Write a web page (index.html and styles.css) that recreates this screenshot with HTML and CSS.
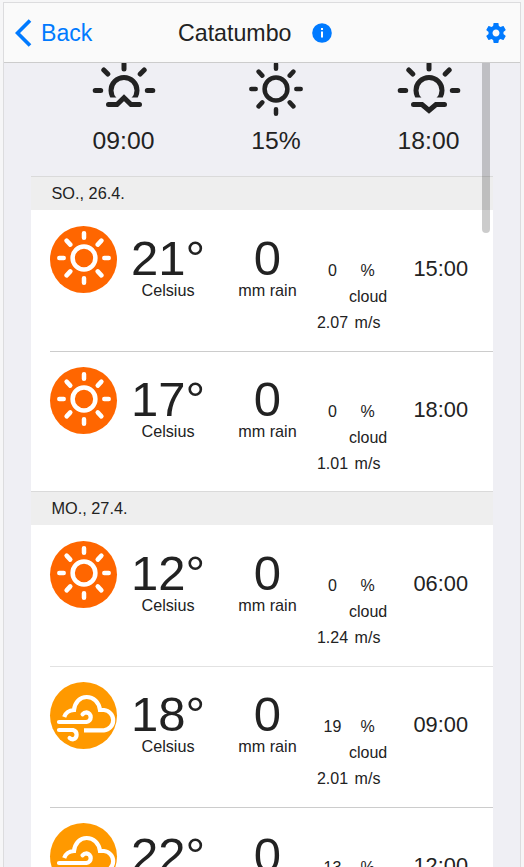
FILE: index.html
```html
<!DOCTYPE html>
<html lang="de">
<head>
<meta charset="utf-8">
<title>Catatumbo</title>
<link rel="stylesheet" href="styles.css">
</head>
<body>
<svg class="defs" aria-hidden="true">
  <clipPath id="above"><rect width="66" height="37.6"/></clipPath>
  <symbol id="sun" viewBox="0 0 60 60">
    <g fill="none" stroke="currentColor" stroke-width="4.5">
      <circle cx="30" cy="30" r="11.4"/>
      <path stroke-linecap="round" d="M30 5.3v4.4M30 50.3V54.7M5.3 30h4.4M50.3 30h4.4M12.6 12.6l3.7 4M47.4 12.6l-3.7 4M12.6 47.4l3.7-4M47.4 47.4l-3.7-4"/>
    </g>
  </symbol>
  <symbol id="horizon" viewBox="0 0 66 60">
    <g fill="none" stroke="currentColor" stroke-width="5">
      <circle cx="33" cy="30.5" r="13" clip-path="url(#above)"/>
      <path stroke-linecap="round" d="M33 4v5M4.2 30.5h5.5M56.3 30.5h5.5M12.8 10l4 4M53.2 10l-4 4"/>
    </g>
  </symbol>
  <symbol id="windcloud" viewBox="0 0 67 67">
    <g fill="none" stroke="currentColor" stroke-width="4.2">
      <path d="M14.2 35C15.5 31 19 28.3 24 28C25 20 30 15 36.7 15S49 20 50 28H54A10.2 10.2 0 0 1 54 48.3H34"/>
      <path stroke-linecap="round" d="M9 40H36.5A4.9 4.9 0 0 0 36.5 30.3Q34 30.3 32.6 32.2M9 48H23A4.8 4.8 0 0 1 23 57.3Q21 57.3 19.6 56"/>
    </g>
  </symbol>
</svg>

<div class="app">
  <header class="bar">
    <div class="back">
      <svg width="17" height="28" viewBox="0 0 17 28"><path d="M15 1.5L2.5 14L15 26.5" fill="none" stroke="currentColor" stroke-width="3.7"/></svg>
      <span>Back</span>
    </div>
    <h1 class="title">Catatumbo</h1>
    <svg class="info" width="20" height="20" viewBox="0 0 20 20"><circle cx="10" cy="10" r="9.8" fill="currentColor"/><path d="M10 8.5v6M10 5v2" stroke="#fff" stroke-width="2"/></svg>
    <svg class="gear" width="24" height="24" viewBox="0 0 24 24"><path fill="currentColor" d="M19.43 12.98c.04-.32.07-.64.07-.98s-.03-.66-.07-.98l2.11-1.65c.19-.15.24-.42.12-.64l-2-3.46c-.12-.22-.39-.3-.61-.22l-2.49 1c-.52-.4-1.08-.73-1.69-.98l-.38-2.65C14.46 2.18 14.25 2 14 2h-4c-.25 0-.46.18-.49.42l-.38 2.65c-.61.25-1.17.59-1.69.98l-2.49-1c-.23-.09-.49 0-.61.22l-2 3.46c-.13.22-.07.49.12.64l2.11 1.65c-.04.32-.07.65-.07.98s.03.66.07.98l-2.11 1.65c-.19.15-.24.42-.12.64l2 3.46c.12.22.39.3.61.22l2.49-1c.52.4 1.08.73 1.69.98l.38 2.65c.03.24.24.42.49.42h4c.25 0 .46-.18.49-.42l.38-2.65c.61-.25 1.17-.59 1.69-.98l2.49 1c.23.09.49 0 .61-.22l2-3.46c.12-.22.07-.49-.12-.64l-2.11-1.65zM12 15.5c-1.93 0-3.5-1.57-3.5-3.5s1.57-3.5 3.5-3.5 3.5 1.57 3.5 3.5-1.57 3.5-3.5 3.5z"/></svg>
  </header>

  <main class="content">
    <section class="summary">
      <div class="fact">
        <svg width="66" height="60" viewBox="0 0 66 60"><use href="#horizon"/><path d="M17.5 44.5H26L33 37.8L40 44.5H48.5" fill="none" stroke="currentColor" stroke-width="5" stroke-linecap="round"/></svg>
        <span>09:00</span>
      </div>
      <div class="fact">
        <svg class="humid" width="60" height="60"><use href="#sun"/></svg>
        <span>15%</span>
      </div>
      <div class="fact">
        <svg width="66" height="60" viewBox="0 0 66 60"><use href="#horizon"/><path d="M17.5 44.5H26L33 50.5L40 44.5H48.5" fill="none" stroke="currentColor" stroke-width="5" stroke-linecap="round"/></svg>
        <span>18:00</span>
      </div>
    </section>

    <section class="forecast">
      <h2 class="day">SO., 26.4.</h2>
      <article class="row">
        <div class="badge hot"><svg width="60" height="60"><use href="#sun"/></svg></div>
        <div class="big"><b>21°</b><span>Celsius</span></div>
        <div class="big"><b>0</b><span>mm rain</span></div>
        <div class="detail"><span>0</span><span>% cloud</span><span>2.07</span><span>m/s</span></div>
        <time>15:00</time>
      </article>
      <article class="row last">
        <div class="badge hot"><svg width="60" height="60"><use href="#sun"/></svg></div>
        <div class="big"><b>17°</b><span>Celsius</span></div>
        <div class="big"><b>0</b><span>mm rain</span></div>
        <div class="detail"><span>0</span><span>% cloud</span><span>1.01</span><span>m/s</span></div>
        <time>18:00</time>
      </article>
      <h2 class="day">MO., 27.4.</h2>
      <article class="row">
        <div class="badge hot"><svg width="60" height="60"><use href="#sun"/></svg></div>
        <div class="big"><b>12°</b><span>Celsius</span></div>
        <div class="big"><b>0</b><span>mm rain</span></div>
        <div class="detail"><span>0</span><span>% cloud</span><span>1.24</span><span>m/s</span></div>
        <time>06:00</time>
      </article>
      <article class="row light">
        <div class="badge warm"><svg width="67" height="67"><use href="#windcloud"/></svg></div>
        <div class="big"><b>18°</b><span>Celsius</span></div>
        <div class="big"><b>0</b><span>mm rain</span></div>
        <div class="detail"><span>19</span><span>% cloud</span><span>2.01</span><span>m/s</span></div>
        <time>09:00</time>
      </article>
      <article class="row">
        <div class="badge warm"><svg width="67" height="67"><use href="#windcloud"/></svg></div>
        <div class="big"><b>22°</b><span>Celsius</span></div>
        <div class="big"><b>0</b><span>mm rain</span></div>
        <div class="detail"><span>13</span><span>% cloud</span><span>2.01</span><span>m/s</span></div>
        <time>12:00</time>
      </article>
    </section>
    <div class="scrollbar"></div>
  </main>
</div>
</body>
</html>
```
FILE: styles.css
```css
* { box-sizing: border-box; }
html, body { height: 100%; overflow: hidden; }
body {
  margin: 0;
  padding: 2px 3px 0 3px;
  background: #f6f6f7;
  color: #222;
  font-family: "Liberation Sans", Arial, sans-serif;
}
svg { display: block; flex: none; }
.defs { position: absolute; width: 0; height: 0; }
.app {
  height: 865px;
  display: flex;
  flex-direction: column;
  border: 1px solid #dcdcde;
  border-bottom: 0;
  overflow: hidden;
}
.bar {
  flex: none;
  height: 60px;
  display: flex;
  align-items: center;
  background: #fafafa;
  border-bottom: 1px solid #ccc;
  padding: 0 12px 0 11px;
}
.back {
  width: 163px;
  display: flex;
  align-items: center;
  gap: 9px;
  color: #007aff;
  font-size: 23.1px;
}
.back span { padding-top: 1px; }
.title { margin: 0; padding-top: 1px; width: 134px; font-size: 23.2px; font-weight: 400; }
.info { color: #007aff; }
.gear { color: #007aff; margin-left: auto; }
.content {
  position: relative;
  flex: 1;
  min-height: 0;
  overflow: hidden;
  background: #efeff4;
  padding: 0 27px;
}
.summary {
  height: 113px;
  display: grid;
  grid-template-columns: 152px 153px 152px;
  padding-left: 16.5px;
}
.fact {
  display: flex;
  flex-direction: column;
  align-items: center;
  font-size: 24.7px;
  line-height: 30px;
}
.fact svg { margin: -3px 0 6px; }
.fact .humid { margin-top: -4px; margin-bottom: 7px; }
.forecast { background: #fff; }
.day {
  margin: 0;
  height: 34px;
  padding-left: 20.5px;
  border-top: 1px solid #dadada;
  background: #eee;
  font-size: 16.3px;
  font-weight: 400;
  line-height: 33px;
}
.row {
  height: 141px;
  margin-left: 19px;
  display: grid;
  grid-template-columns: 67px 102px 97px 70px 1fr;
}
.last { height: 140px; }
.row + .row { border-top: 1px solid #ccc; }
.row + .light { border-color: #e2e2e2; }
.row + .row > * { position: relative; top: -1px; }
.badge {
  width: 67px;
  height: 67px;
  margin-top: 16px;
  border-radius: 50%;
  color: #fff;
  overflow: hidden;
}
.hot { background: #ff6600; padding: 2px 4px; }
.warm { background: #ff9900; }
.big { text-align: center; padding-top: 26px; font-size: 16.2px; line-height: 18px; }
.big b { display: block; font-size: 49px; line-height: 45px; font-weight: 400; }
.detail {
  display: grid;
  grid-template-columns: 33px 37px;
  grid-template-rows: 52px 26px;
  text-align: center;
  padding-top: 48px;
  font-size: 16px;
  line-height: 26px;
}
time { padding: 46px 25px 0 0; text-align: right; font-size: 21.8px; line-height: 26px; }
.scrollbar {
  position: absolute;
  top: -10px;
  left: 478px;
  width: 8px;
  height: 180px;
  border-radius: 4px;
  background: rgba(0, 0, 0, .2);
}
```
